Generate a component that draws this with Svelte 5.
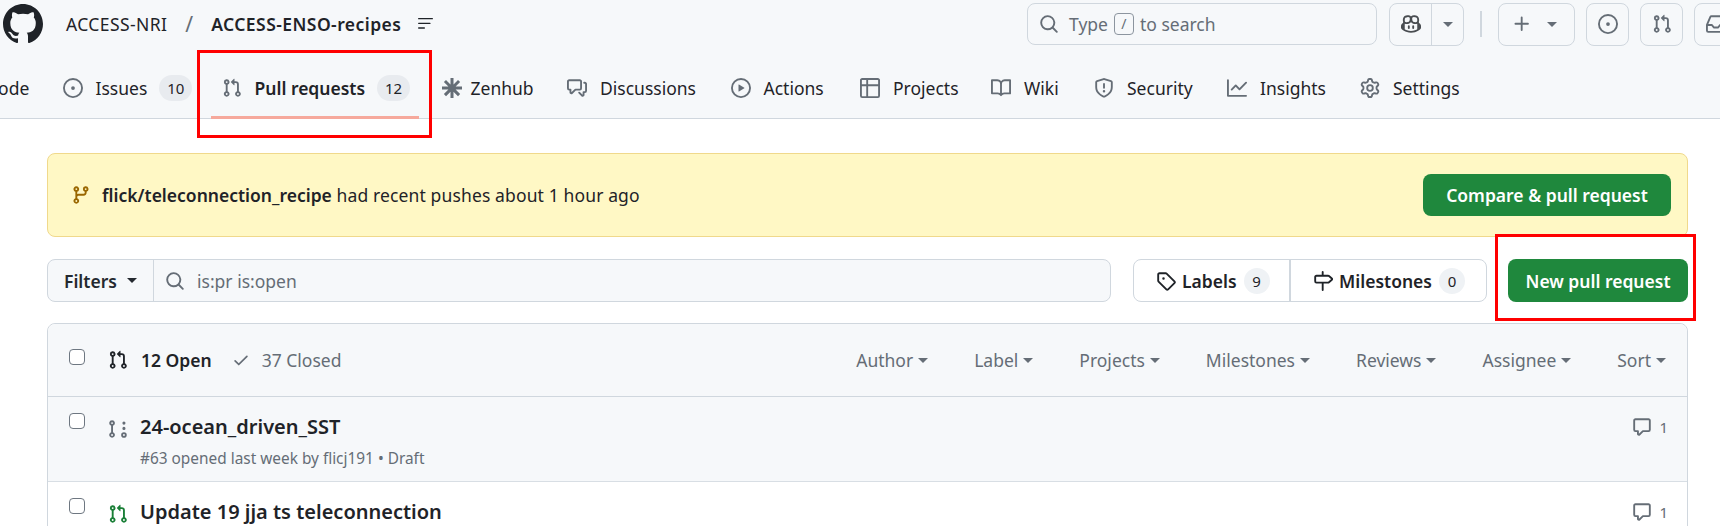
<script lang="ts">
  const paths: Record<string, string> = {
    code: 'm11.28 3.22 4.25 4.25a.75.75 0 0 1 0 1.06l-4.25 4.25a.749.749 0 0 1-1.275-.326.749.749 0 0 1 .215-.734L13.94 8l-3.72-3.72a.749.749 0 0 1 .326-1.275.749.749 0 0 1 .734.215Zm-6.56 0a.751.751 0 0 1 1.042.018.751.751 0 0 1 .018 1.042L2.06 8l3.72 3.72a.749.749 0 0 1-.326 1.275.749.749 0 0 1-.734-.215L.47 8.53a.75.75 0 0 1 0-1.06Z',
    issue: 'M8 9.5a1.5 1.5 0 1 0 0-3 1.5 1.5 0 0 0 0 3ZM8 0a8 8 0 1 1 0 16A8 8 0 0 1 8 0ZM1.5 8a6.5 6.5 0 1 0 13 0 6.5 6.5 0 0 0-13 0Z',
    pr: 'M1.5 3.25a2.25 2.25 0 1 1 3 2.122v5.256a2.251 2.251 0 1 1-1.5 0V5.372A2.25 2.25 0 0 1 1.5 3.25Zm5.677-.177L9.573.677A.25.25 0 0 1 10 .854V2.5h1A2.5 2.5 0 0 1 13.5 5v5.628a2.251 2.251 0 1 1-1.5 0V5a1 1 0 0 0-1-1h-1v1.646a.25.25 0 0 1-.427.177L7.177 3.427a.25.25 0 0 1 0-.354ZM3.75 2.5a.75.75 0 1 0 0 1.5.75.75 0 0 0 0-1.5Zm0 9.5a.75.75 0 1 0 0 1.5.75.75 0 0 0 0-1.5Zm8.25.75a.75.75 0 1 0 1.5 0 .75.75 0 0 0-1.5 0Z',
    draft: 'M3.25 1A2.25 2.25 0 0 1 4 5.372v5.256a2.251 2.251 0 1 1-1.5 0V5.372A2.251 2.251 0 0 1 3.25 1Zm9.5 14a2.25 2.25 0 1 1 0-4.5 2.25 2.25 0 0 1 0 4.5ZM2.5 3.25a.75.75 0 1 0 1.5 0 .75.75 0 0 0-1.5 0ZM3.25 12a.75.75 0 1 0 0 1.5.75.75 0 0 0 0-1.5Zm9.5 0a.75.75 0 1 0 0 1.5.75.75 0 0 0 0-1.5ZM14 7.5a1.25 1.25 0 1 1-2.5 0 1.25 1.25 0 0 1 2.5 0Zm0-4.25a1.25 1.25 0 1 1-2.5 0 1.25 1.25 0 0 1 2.5 0Z',
    zenhub: 'M6.8 0h2.4v5.1l3.6-3.6 1.7 1.7-3.6 3.6H16v2.4h-5.1l3.6 3.6-1.7 1.7-3.6-3.6V16H6.8v-5.1l-3.6 3.6-1.7-1.7 3.6-3.6H0V6.8h5.1L1.5 3.2l1.7-1.7 3.6 3.6Z',
    discussion: 'M1.75 1h8.5c.966 0 1.75.784 1.75 1.75v5.5A1.75 1.75 0 0 1 10.25 10H7.061l-2.574 2.573A1.458 1.458 0 0 1 2 11.543V10h-.25A1.75 1.75 0 0 1 0 8.25v-5.5C0 1.784.784 1 1.75 1ZM1.5 2.75v5.5c0 .138.112.25.25.25h1a.75.75 0 0 1 .75.75v2.19l2.72-2.72a.749.749 0 0 1 .53-.22h3.5a.25.25 0 0 0 .25-.25v-5.5a.25.25 0 0 0-.25-.25h-8.5a.25.25 0 0 0-.25.25Zm13 2a.25.25 0 0 0-.25-.25h-.5a.75.75 0 0 1 0-1.5h.5c.966 0 1.75.784 1.75 1.75v5.5A1.75 1.75 0 0 1 14.25 12H14v1.543a1.458 1.458 0 0 1-2.487 1.03L9.22 12.28a.749.749 0 0 1 .326-1.275.749.749 0 0 1 .734.215l2.22 2.22v-2.19a.75.75 0 0 1 .75-.75h1a.25.25 0 0 0 .25-.25Z',
    play: 'M8 0a8 8 0 1 1 0 16A8 8 0 0 1 8 0ZM1.5 8a6.5 6.5 0 1 0 13 0 6.5 6.5 0 0 0-13 0Zm4.879-2.773 4.264 2.559a.25.25 0 0 1 0 .428l-4.264 2.559A.25.25 0 0 1 6 10.559V5.442a.25.25 0 0 1 .379-.215Z',
    table: 'M0 1.75C0 .784.784 0 1.75 0h12.5C15.216 0 16 .784 16 1.75v12.5A1.75 1.75 0 0 1 14.25 16H1.75A1.75 1.75 0 0 1 0 14.25ZM6.5 6.5v8h7.75a.25.25 0 0 0 .25-.25V6.5Zm8-1.5V1.75a.25.25 0 0 0-.25-.25H6.5V5Zm-13 1.5v7.75c0 .138.112.25.25.25H5v-8ZM5 5V1.5H1.75a.25.25 0 0 0-.25.25V5Z',
    book: 'M0 1.75A.75.75 0 0 1 .75 1h4.253c1.227 0 2.317.59 3 1.501A3.743 3.743 0 0 1 11.006 1h4.245a.75.75 0 0 1 .75.75v10.5a.75.75 0 0 1-.75.75h-4.507a2.25 2.25 0 0 0-1.591.659l-.622.621a.75.75 0 0 1-1.06 0l-.622-.621A2.25 2.25 0 0 0 5.258 13H.75a.75.75 0 0 1-.75-.75Zm7.251 10.324.004-5.073-.002-2.253A2.25 2.25 0 0 0 5.003 2.5H1.5v9h3.757a3.75 3.75 0 0 1 1.994.574ZM8.755 4.75l-.004 7.322a3.752 3.752 0 0 1 1.992-.572H14.5v-9h-3.495a2.25 2.25 0 0 0-2.25 2.25Z',
    shield: 'M7.467.133a1.748 1.748 0 0 1 1.066 0l5.25 1.68A1.75 1.75 0 0 1 15 3.48V7c0 1.566-.32 3.182-1.303 4.682-.983 1.498-2.585 2.813-5.032 3.855a1.697 1.697 0 0 1-1.33 0c-2.447-1.042-4.049-2.357-5.032-3.855C1.32 10.182 1 8.566 1 7V3.48a1.75 1.75 0 0 1 1.217-1.667Zm.61 1.429a.25.25 0 0 0-.153 0l-5.25 1.68a.25.25 0 0 0-.174.238V7c0 1.358.275 2.666 1.057 3.86.784 1.194 2.121 2.34 4.366 3.297a.196.196 0 0 0 .154 0c2.245-.956 3.582-2.104 4.366-3.298C13.225 9.666 13.5 8.36 13.5 7V3.48a.251.251 0 0 0-.174-.237l-5.25-1.68ZM8.75 4.75v3a.75.75 0 0 1-1.5 0v-3a.75.75 0 0 1 1.5 0ZM9 10.5a1 1 0 1 1-2 0 1 1 0 0 1 2 0Z',
    graph: 'M1.5 1.75V13.5h13.75a.75.75 0 0 1 0 1.5H.75a.75.75 0 0 1-.75-.75V1.75a.75.75 0 0 1 1.5 0Zm14.28 2.53-5.25 5.25a.75.75 0 0 1-1.06 0L7 7.06 4.28 9.78a.751.751 0 0 1-1.042-.018.751.751 0 0 1-.018-1.042l3.25-3.25a.75.75 0 0 1 1.06 0L10 7.94l4.72-4.72a.751.751 0 0 1 1.042.018.751.751 0 0 1 .018 1.042Z',
    gear: 'M8 0a8.2 8.2 0 0 1 .701.031C9.444.095 9.99.645 10.16 1.29l.288 1.107c.018.066.079.158.212.224.231.114.454.243.668.386.123.082.233.09.299.071l1.103-.303c.644-.176 1.392.021 1.82.63.27.385.506.792.704 1.218.315.675.111 1.422-.364 1.891l-.814.806c-.049.048-.098.147-.088.294.016.257.016.515 0 .772-.01.147.038.246.088.294l.814.806c.475.469.679 1.216.364 1.891a7.977 7.977 0 0 1-.704 1.217c-.428.61-1.176.807-1.82.63l-1.102-.302c-.067-.019-.177-.011-.3.071a5.909 5.909 0 0 1-.668.386c-.133.066-.194.158-.211.224l-.29 1.106c-.168.646-.715 1.196-1.458 1.26a8.006 8.006 0 0 1-1.402 0c-.743-.064-1.289-.614-1.458-1.26l-.289-1.106c-.018-.066-.079-.158-.212-.224a5.738 5.738 0 0 1-.668-.386c-.123-.082-.233-.09-.299-.071l-1.103.303c-.644.176-1.392-.021-1.82-.63a8.12 8.12 0 0 1-.704-1.218c-.315-.675-.111-1.422.363-1.891l.815-.806c.05-.048.098-.147.088-.294a6.214 6.214 0 0 1 0-.772c.01-.147-.038-.246-.088-.294l-.815-.806C.635 6.045.431 5.298.746 4.623a7.92 7.92 0 0 1 .704-1.217c.428-.61 1.176-.807 1.82-.63l1.102.302c.067.019.177.011.3-.071.214-.143.437-.272.668-.386.133-.066.194-.158.211-.224l.29-1.106C6.009.645 6.556.095 7.299.03 7.53.01 7.764 0 8 0Zm-.571 1.525c-.036.003-.108.036-.137.146l-.289 1.105c-.147.561-.549.967-.998 1.189-.173.086-.34.183-.5.29-.417.278-.97.423-1.529.27l-1.103-.303c-.109-.03-.175.016-.195.045-.22.312-.412.644-.573.99-.014.031-.021.11.059.19l.815.806c.411.406.562.957.53 1.456a4.709 4.709 0 0 0 0 .582c.032.499-.119 1.05-.53 1.456l-.815.806c-.081.08-.073.159-.059.19.162.346.353.677.573.989.02.03.085.076.195.046l1.102-.303c.56-.153 1.113-.008 1.53.27.161.107.328.204.501.29.447.222.85.629.997 1.189l.289 1.105c.029.109.101.143.137.146a6.6 6.6 0 0 0 1.142 0c.036-.003.108-.036.137-.146l.289-1.105c.147-.561.549-.967.998-1.189.173-.086.34-.183.5-.29.417-.278.97-.423 1.529-.27l1.103.303c.109.029.175-.016.195-.045.22-.313.411-.644.573-.99.014-.031.021-.11-.059-.19l-.815-.806c-.411-.406-.562-.957-.53-1.456a4.709 4.709 0 0 0 0-.582c-.032-.499.119-1.05.53-1.456l.815-.806c.081-.08.073-.159.059-.19a6.464 6.464 0 0 0-.573-.989c-.02-.03-.085-.076-.195-.046l-1.102.303c-.56.153-1.113.008-1.53-.27a4.44 4.44 0 0 0-.501-.29c-.447-.222-.85-.629-.997-1.189l-.289-1.105c-.029-.11-.101-.143-.137-.146a6.6 6.6 0 0 0-1.142 0ZM11 8a3 3 0 1 1-6 0 3 3 0 0 1 6 0ZM9.5 8a1.5 1.5 0 1 0-3.001.001A1.5 1.5 0 0 0 9.5 8Z',
    github: 'M8 0c4.42 0 8 3.58 8 8a8.013 8.013 0 0 1-5.45 7.59c-.4.08-.55-.17-.55-.38 0-.27.01-1.13.01-2.2 0-.75-.25-1.23-.54-1.48 1.78-.2 3.65-.88 3.65-3.95 0-.88-.31-1.59-.82-2.15.08-.2.36-1.02-.08-2.12 0 0-.67-.22-2.2.82-.64-.18-1.32-.27-2-.27-.68 0-1.36.09-2 .27-1.53-1.03-2.2-.82-2.2-.82-.44 1.1-.16 1.92-.08 2.12-.51.56-.82 1.28-.82 2.15 0 3.06 1.86 3.75 3.64 3.95-.23.2-.44.55-.51 1.07-.46.21-1.61.55-2.33-.66-.15-.24-.6-.83-1.23-.82-.67.01-.27.38.01.53.34.19.73.9.82 1.13.16.45.68 1.31 2.69.94 0 .67.01 1.3.01 1.49 0 .21-.15.45-.55.38A7.995 7.995 0 0 1 0 8c0-4.42 3.58-8 8-8Z',
    bars: 'M0 1.75A.75.75 0 0 1 .75 1h14.5a.75.75 0 0 1 0 1.5H.75A.75.75 0 0 1 0 1.75Zm0 5A.75.75 0 0 1 .75 6h12a.75.75 0 0 1 0 1.5h-12A.75.75 0 0 1 0 6.75Zm0 5a.75.75 0 0 1 .75-.75h6a.75.75 0 0 1 0 1.5h-6a.75.75 0 0 1-.75-.75Z',
    search: 'M10.68 11.74a6 6 0 0 1-7.922-8.982 6 6 0 0 1 8.982 7.922l3.04 3.04a.749.749 0 0 1-.326 1.275.749.749 0 0 1-.734-.215ZM11.5 7a4.499 4.499 0 1 0-8.997 0A4.499 4.499 0 0 0 11.5 7Z',
    copilot: 'M7.998 15.035c-4.562 0-7.873-2.914-7.998-3.749V9.338c.085-.628.677-1.686 1.588-2.065.013-.07.024-.143.036-.218.029-.183.06-.384.126-.612-.201-.508-.254-1.084-.254-1.656 0-.87.128-1.769.693-2.484.579-.733 1.494-1.124 2.724-1.261 1.206-.134 2.262.034 2.944.765.05.053.096.108.139.165.044-.057.094-.112.143-.165.682-.731 1.738-.899 2.944-.765 1.23.137 2.145.528 2.724 1.261.566.715.693 1.614.693 2.484 0 .572-.053 1.148-.254 1.656.066.228.098.429.126.612.012.076.024.148.037.218.924.385 1.522 1.471 1.591 2.095v1.872c0 .766-3.351 3.795-8.002 3.795Zm0-1.485c2.28 0 4.584-1.11 5.002-1.433V7.862l-.023-.116c-.49.21-1.075.291-1.727.291-1.146 0-2.059-.327-2.71-.991A3.222 3.222 0 0 1 8 6.303a3.24 3.24 0 0 1-.544.743c-.65.664-1.563.991-2.71.991-.652 0-1.236-.081-1.727-.291l-.023.116v4.255c.419.323 2.722 1.433 5.002 1.433ZM6.762 2.83c-.193-.206-.637-.413-1.682-.297-1.019.113-1.479.404-1.713.7-.247.312-.369.789-.369 1.554 0 .793.129 1.171.308 1.371.162.181.519.379 1.442.379.853 0 1.339-.235 1.638-.54.315-.322.527-.827.617-1.553.117-.935-.037-1.395-.241-1.614Zm4.155-.297c-1.044-.116-1.488.091-1.681.297-.204.219-.359.679-.242 1.614.091.726.303 1.231.618 1.553.299.305.784.54 1.638.54.922 0 1.28-.198 1.442-.379.179-.2.308-.578.308-1.371 0-.765-.123-1.242-.37-1.554-.233-.296-.693-.587-1.713-.7ZM6.25 9.037a.75.75 0 0 1 .75.75v1.501a.75.75 0 0 1-1.5 0V9.787a.75.75 0 0 1 .75-.75Zm4.25.75v1.501a.75.75 0 0 1-1.5 0V9.787a.75.75 0 0 1 1.5 0Z',
    plus: 'M7.75 2a.75.75 0 0 1 .75.75V7h4.25a.75.75 0 0 1 0 1.5H8.5v4.25a.75.75 0 0 1-1.5 0V8.5H2.75a.75.75 0 0 1 0-1.5H7V2.75A.75.75 0 0 1 7.75 2Z',
    inbox: 'M2.8 2.06A1.75 1.75 0 0 1 4.41 1h7.18c.7 0 1.333.417 1.61 1.06l2.74 6.395c.04.093.06.194.06.295v4.5A1.75 1.75 0 0 1 14.25 15H1.75A1.75 1.75 0 0 1 0 13.25v-4.5c0-.101.02-.202.06-.295Zm1.61.44a.25.25 0 0 0-.23.152L1.887 8H4.75a.75.75 0 0 1 .6.3L6.625 10h2.75l1.275-1.7a.75.75 0 0 1 .6-.3h2.863L11.82 2.652a.25.25 0 0 0-.23-.152Zm10.09 7h-2.875l-1.275 1.7a.75.75 0 0 1-.6.3h-3.5a.75.75 0 0 1-.6-.3L4.375 9.5H1.5v3.75c0 .138.112.25.25.25h12.5a.25.25 0 0 0 .25-.25Z',
    branch: 'M9.5 3.25a2.25 2.25 0 1 1 3 2.122V6A2.5 2.5 0 0 1 10 8.5H6a1 1 0 0 0-1 1v1.128a2.251 2.251 0 1 1-1.5 0V5.372a2.25 2.25 0 1 1 1.5 0v1.836A2.493 2.493 0 0 1 6 7h4a1 1 0 0 0 1-1v-.628A2.25 2.25 0 0 1 9.5 3.25Zm-6 0a.75.75 0 1 0 1.5 0 .75.75 0 0 0-1.5 0Zm8.25-.75a.75.75 0 1 0 0 1.5.75.75 0 0 0 0-1.5ZM4.25 12a.75.75 0 1 0 0 1.5.75.75 0 0 0 0-1.5Z',
    tag: 'M1 7.775V2.75C1 1.784 1.784 1 2.75 1h5.025c.464 0 .91.184 1.238.513l6.25 6.25a1.75 1.75 0 0 1 0 2.474l-5.026 5.026a1.75 1.75 0 0 1-2.474 0l-6.25-6.25A1.752 1.752 0 0 1 1 7.775Zm1.5 0c0 .066.026.13.073.177l6.25 6.25a.25.25 0 0 0 .354 0l5.025-5.025a.25.25 0 0 0 0-.354l-6.25-6.25a.25.25 0 0 0-.177-.073H2.75a.25.25 0 0 0-.25.25ZM6 5a1 1 0 1 1 0 2 1 1 0 0 1 0-2Z',
    milestone: 'M7.75 0a.75.75 0 0 1 .75.75V3h3.634c.414 0 .814.147 1.13.414l2.07 1.75a1.75 1.75 0 0 1 0 2.672l-2.07 1.75a1.75 1.75 0 0 1-1.13.414H8.5v5.25a.75.75 0 0 1-1.5 0V10H2.75A1.75 1.75 0 0 1 1 8.25v-3.5C1 3.784 1.784 3 2.75 3H7V.75A.75.75 0 0 1 7.75 0Zm4.384 8.5a.25.25 0 0 0 .161-.06l2.07-1.75a.248.248 0 0 0 0-.38l-2.07-1.75a.25.25 0 0 0-.161-.06H2.75a.25.25 0 0 0-.25.25v3.5c0 .138.112.25.25.25h9.384Z',
    check: 'M13.78 4.22a.75.75 0 0 1 0 1.06l-7.25 7.25a.75.75 0 0 1-1.06 0L2.22 9.28a.751.751 0 0 1 .018-1.042.751.751 0 0 1 1.042-.018L6 10.94l6.72-6.72a.75.75 0 0 1 1.06 0Z',
    comment: 'M1 2.75C1 1.784 1.784 1 2.75 1h10.5c.966 0 1.75.784 1.75 1.75v7.5A1.75 1.75 0 0 1 13.25 12H9.06l-2.573 2.573A1.458 1.458 0 0 1 4 13.543V12H2.75A1.75 1.75 0 0 1 1 10.25Zm1.75-.25a.25.25 0 0 0-.25.25v7.5c0 .138.112.25.25.25h2a.75.75 0 0 1 .75.75v2.19l2.72-2.72a.749.749 0 0 1 .53-.22h4.5a.25.25 0 0 0 .25-.25v-7.5a.25.25 0 0 0-.25-.25Z'
  };

  const tabs = [
    { icon: 'code', label: 'Code' },
    { icon: 'issue', label: 'Issues', count: 10 },
    { icon: 'pr', label: 'Pull requests', count: 12, selected: true },
    { icon: 'zenhub', label: 'Zenhub', tight: true },
    { icon: 'discussion', label: 'Discussions' },
    { icon: 'play', label: 'Actions' },
    { icon: 'table', label: 'Projects' },
    { icon: 'book', label: 'Wiki' },
    { icon: 'shield', label: 'Security' },
    { icon: 'graph', label: 'Insights' },
    { icon: 'gear', label: 'Settings' }
  ];

  const listFilters = ['Author', 'Label', 'Projects', 'Milestones', 'Reviews', 'Assignee', 'Sort'];
</script>

{#snippet icon(name: string, size = 20, cls = '')}
  <svg class={cls} width={size} height={size} viewBox="0 0 16 16" fill="currentColor" aria-hidden="true"><path d={paths[name]} /></svg>
{/snippet}

<div class="page">
  <header class="header">
    <div class="topbar">
      <span class="logo">{@render icon('github', 40)}</span>
      <a class="owner" href="#owner">ACCESS-NRI</a>
      <span class="slash">/</span>
      <a class="repo" href="#repo">ACCESS-ENSO-recipes</a>
      <span class="repo-menu">{@render icon('bars', 15)}</span>

      <div class="search">
        {@render icon('search', 20)}
        <span>Type</span><kbd>/</kbd><span>to search</span>
      </div>
      <div class="icon-btn copilot">
        <span class="copilot-main">{@render icon('copilot', 20)}</span>
        <span class="copilot-caret"><i class="caret"></i></span>
      </div>
      <span class="sep"></span>
      <div class="icon-btn plus">{@render icon('plus', 20)}<i class="caret"></i></div>
      <div class="icon-btn square">{@render icon('issue', 20)}</div>
      <div class="icon-btn square">{@render icon('pr', 20)}</div>
      <div class="icon-btn square">{@render icon('inbox', 20)}</div>
    </div>

    <nav class="tabs">
      {#each tabs as tab}
        <a class="tab" class:selected={tab.selected} class:tight={tab.tight} href="#tab">
          {@render icon(tab.icon, 20)}
          <span class="tab-label">{tab.label}</span>
          {#if tab.count}<span class="counter">{tab.count}</span>{/if}
        </a>
      {/each}
    </nav>
  </header>

  <main class="main">
    <div class="banner">
      <span class="banner-icon">{@render icon('branch', 20)}</span>
      <span class="banner-text"><strong>flick/teleconnection_recipe</strong> had recent pushes about 1 hour ago</span>
      <button class="primary compare">Compare &amp; pull request</button>
    </div>

    <div class="filters">
      <div class="filter-box">
        <span class="filter-btn">Filters <i class="caret"></i></span>
        <span class="filter-input">{@render icon('search', 20)}<span>is:pr is:open</span></span>
      </div>
      <div class="labels">
        <span class="label-link first">{@render icon('tag', 20)}<b>Labels</b><em>9</em></span>
        <span class="label-link">{@render icon('milestone', 20)}<b>Milestones</b><em>0</em></span>
      </div>
      <button class="primary new-pr">New pull request</button>
    </div>

    <section class="list">
      <div class="list-head">
        <input type="checkbox" />
        <span class="open">{@render icon('pr', 20)}<b>12 Open</b></span>
        <span class="closed">{@render icon('check', 20)}<span>37 Closed</span></span>
        <div class="list-filters">
          {#each listFilters as f}
            <span>{f}<i class="caret"></i></span>
          {/each}
        </div>
      </div>

      <div class="row draft">
        <input type="checkbox" />
        <span class="state muted">{@render icon('draft', 20)}</span>
        <div class="row-body">
          <div class="title">24-ocean_driven_SST</div>
          <div class="meta">#63 opened last week by flicj191 • Draft</div>
        </div>
        <span class="comments">{@render icon('comment', 20)}<span>1</span></span>
      </div>

      <div class="row">
        <input type="checkbox" />
        <span class="state green">{@render icon('pr', 20)}</span>
        <div class="row-body">
          <div class="title">Update 19 jja ts teleconnection</div>
        </div>
        <span class="comments">{@render icon('comment', 20)}<span>1</span></span>
      </div>
    </section>
  </main>

  <div class="callout callout-tab"></div>
  <div class="callout callout-new"></div>
</div>

<style>
  :global(body) {
    margin: 0;
    background: #fff;
  }

  .page {
    position: relative;
    width: 1720px;
    height: 526px;
    overflow: hidden;
    font-family: "Noto Sans", Roboto, sans-serif;
    font-size: 17.5px;
    line-height: 24px;
    color: #1f2328;
  }

  a {
    color: inherit;
    text-decoration: none;
  }

  svg {
    display: block;
    flex: none;
  }

  .header {
    height: 118px;
    background: #f6f8fa;
    border-bottom: 1px solid #d0d7de;
  }

  .topbar {
    display: flex;
    align-items: center;
    height: 48px;
    margin-right: -17px;
    padding-left: 3px;
  }

  .owner {
    margin-left: 23px;
    letter-spacing: 0.4px;
  }

  .slash {
    margin-left: 18px;
    font-size: 21px;
    color: #656d76;
  }

  .repo {
    margin-left: 18px;
    font-weight: 600;
    letter-spacing: 0.45px;
  }

  .repo-menu {
    margin-left: 17px;
    color: #1f2328;
  }

  .search {
    display: flex;
    align-items: center;
    gap: 6px;
    width: 350px;
    height: 42px;
    margin-left: auto;
    padding-left: 11px;
    box-sizing: border-box;
    border: 1px solid #d0d7de;
    border-radius: 8px;
    color: #656d76;
  }

  .search svg {
    margin-right: 4px;
  }

  kbd {
    display: inline-flex;
    align-items: center;
    justify-content: center;
    width: 20px;
    height: 22px;
    box-sizing: border-box;
    border: 1px solid #8c959f;
    border-radius: 4px;
    font: inherit;
    font-size: 14px;
  }

  .icon-btn {
    display: flex;
    align-items: center;
    justify-content: center;
    box-sizing: border-box;
    height: 43px;
    border: 1px solid #d0d7de;
    border-radius: 8px;
    color: #656d76;
  }

  .copilot {
    width: 75px;
    margin-left: 12px;
  }

  .copilot-main {
    flex: 1;
    display: flex;
    justify-content: center;
    color: #1f2328;
    opacity: 0.8;
  }

  .copilot-caret {
    display: flex;
    align-items: center;
    justify-content: center;
    width: 31px;
    height: 100%;
    border-left: 1px solid #d0d7de;
  }

  .sep {
    width: 2px;
    height: 26px;
    margin: 0 16px;
    background: #d0d7de;
  }

  .plus {
    width: 77px;
    gap: 15px;
    padding: 0 4px 0 0;
  }

  .square {
    width: 43px;
    margin-left: 11px;
  }

  .caret {
    display: inline-block;
    width: 0;
    height: 0;
    border-left: 5px solid transparent;
    border-right: 5px solid transparent;
    border-top: 5px solid currentColor;
  }

  .tabs {
    display: grid;
    grid-template-columns: 96.5px 147px 208px 113.5px 151.5px 117.5px 119px 91px 121px 121px 121px;
    column-gap: 12px;
    height: 60px;
    margin: 10px 0 0 -56.5px;
    width: max-content;
  }

  .tab {
    position: relative;
    display: flex;
    align-items: center;
    gap: 13px;
    padding-left: 10.5px;
    color: #1f2328;
    white-space: nowrap;
  }

  .tab.tight {
    gap: 9px;
  }

  .tab svg {
    color: #656d76;
  }

  .tab.selected .tab-label {
    font-weight: 600;
  }

  .tab.selected::after {
    content: "";
    position: absolute;
    left: 0;
    right: 0;
    bottom: -1px;
    height: 3px;
    background: #f6a99c;
  }

  .counter {
    display: flex;
    align-items: center;
    justify-content: center;
    width: 33px;
    height: 26px;
    margin-left: -1px;
    border-radius: 13px;
    background: #e8ebef;
    font-size: 15px;
  }

  .main {
    padding: 34px 32px 0 47px;
  }

  .banner {
    display: flex;
    align-items: center;
    height: 84px;
    box-sizing: border-box;
    padding: 0 16px 0 23px;
    border: 1px solid #f0d98c;
    border-radius: 8px;
    background: #fff8c5;
  }

  .banner-icon {
    color: #9a6700;
  }

  .banner-text {
    margin-left: 11px;
    letter-spacing: 0.13px;
  }

  .banner-text strong {
    font-weight: 600;
    letter-spacing: 0;
  }

  .primary {
    border: 0;
    border-radius: 8px;
    background: #1f883d;
    color: #fff;
    font: inherit;
    font-weight: 600;
  }

  .compare {
    width: 248px;
    height: 42px;
    margin-left: auto;
  }

  .filters {
    display: flex;
    align-items: center;
    margin-top: 22px;
  }

  .filter-box {
    display: flex;
    width: 1064px;
    height: 43px;
    box-sizing: border-box;
    border: 1px solid #d0d7de;
    border-radius: 8px;
    background: #f6f8fa;
  }

  .filter-btn {
    display: flex;
    align-items: center;
    gap: 10px;
    width: 106px;
    padding-left: 16px;
    box-sizing: border-box;
    border-right: 1px solid #d0d7de;
    font-weight: 600;
    color: #24292f;
  }

  .filter-input {
    display: flex;
    align-items: center;
    gap: 12px;
    padding-left: 11px;
    color: #656d76;
  }

  .labels {
    display: flex;
    width: 354px;
    height: 43px;
    margin-left: 22px;
    box-sizing: border-box;
    border: 1px solid #d0d7de;
    border-radius: 8px;
  }

  .label-link {
    flex: 1;
    display: flex;
    align-items: center;
    gap: 6px;
    padding-left: 22px;
  }

  .label-link.first {
    flex: none;
    width: 157px;
    box-sizing: border-box;
    padding-left: 22px;
    border-right: 2px solid #d0d7de;
  }

  .label-link b {
    font-weight: 600;
  }

  .label-link em {
    display: flex;
    align-items: center;
    justify-content: center;
    width: 26px;
    height: 26px;
    margin-left: 1px;
    border-radius: 13px;
    background: #eff2f5;
    font-style: normal;
    font-size: 15px;
  }

  .new-pr {
    width: 180px;
    height: 43px;
    margin-left: 21px;
  }

  .list {
    margin-top: 21px;
    height: 300px;
    box-sizing: border-box;
    border: 1px solid #d0d7de;
    border-radius: 8px 8px 0 0;
  }

  .list-head {
    display: flex;
    align-items: center;
    height: 72px;
    padding-left: 21px;
    background: #f6f8fa;
    border-radius: 8px 8px 0 0;
    border-bottom: 1px solid #d0d7de;
  }

  input[type="checkbox"] {
    appearance: none;
    flex: none;
    width: 16px;
    height: 16px;
    margin: 0;
    box-sizing: border-box;
    border: 1px solid #6e7781;
    border-radius: 4px;
    background: #fff;
  }

  .list-head input {
    margin-top: -7px;
  }

  .open,
  .closed {
    display: flex;
    align-items: center;
  }

  .open {
    gap: 13px;
    margin-left: 23px;
  }

  .open b {
    font-weight: 600;
  }

  .closed {
    gap: 12px;
    margin-left: 20px;
    color: #656d76;
  }

  .closed svg {
    width: 18px;
    height: 18px;
  }

  .list-filters {
    display: flex;
    gap: 46px;
    margin-left: auto;
    padding-right: 21px;
    color: #656d76;
  }

  .list-filters span {
    display: flex;
    align-items: center;
    gap: 5px;
  }

  .row {
    display: flex;
    height: 85px;
    box-sizing: border-box;
    padding: 16px 19px 0 21px;
    border-bottom: 1px solid #d8dee4;
  }

  .row.draft {
    background: #f6f8fa;
  }

  .state {
    margin-left: 23px;
    margin-top: 6px;
  }

  .muted {
    color: #656d76;
  }

  .green {
    color: #1a7f37;
  }

  .row-body {
    margin-left: 12px;
  }

  .title {
    font-size: 20px;
    line-height: 28px;
    font-weight: 600;
  }

  .meta {
    margin-top: 8px;
    font-size: 15.4px;
    line-height: 20px;
    color: #656d76;
  }

  .comments {
    display: flex;
    align-items: center;
    align-self: flex-start;
    gap: 7px;
    margin-left: auto;
    margin-top: 2px;
    color: #656d76;
    font-size: 15px;
  }

  .callout {
    position: absolute;
    box-sizing: border-box;
    border: 3px solid #ff0000;
  }

  .callout-tab {
    left: 197px;
    top: 50px;
    width: 235px;
    height: 88px;
  }

  .callout-new {
    left: 1495px;
    top: 234px;
    width: 201px;
    height: 87px;
  }
</style>
